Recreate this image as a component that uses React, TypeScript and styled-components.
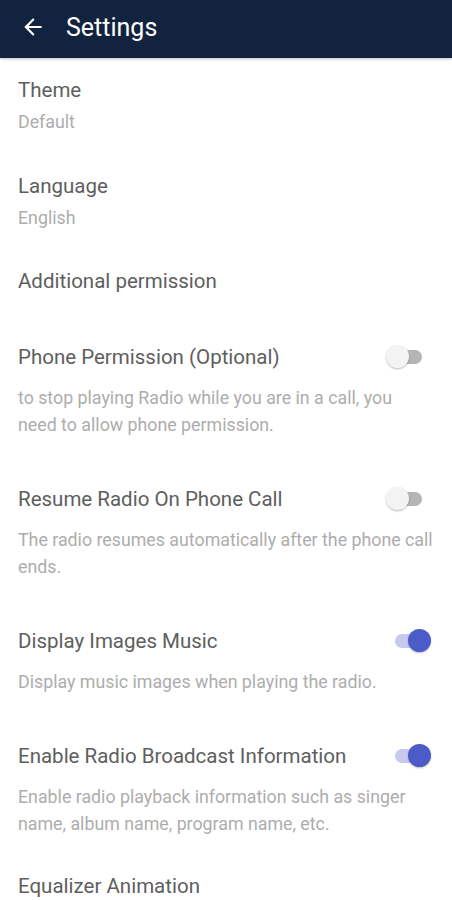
import React from "react";
import styled, { createGlobalStyle } from "styled-components";

const GlobalStyle = createGlobalStyle`
  body {
    margin: 0;
    background: #fff;
    font-family: Roboto, "Noto Sans", sans-serif;
  }
`;

type SwitchPref = {
  title: string;
  desc: string;
  on: boolean;
};

const switches: SwitchPref[] = [
  {
    title: "Phone Permission (Optional)",
    desc: "to stop playing Radio while you are in a call, you need to allow phone permission.",
    on: false,
  },
  {
    title: "Resume Radio On Phone Call",
    desc: "The radio resumes automatically after the phone call ends.",
    on: false,
  },
  {
    title: "Display Images Music",
    desc: "Display music images when playing the radio.",
    on: true,
  },
  {
    title: "Enable Radio Broadcast Information",
    desc: "Enable radio playback information such as singer name, album name, program name, etc.",
    on: true,
  },
];

const App = () => {
  return (
    <Page>
      <GlobalStyle />
      <Header>
        <BackButton aria-label="back">
          <svg width="26" height="26" viewBox="0 0 24 24">
            <path
              d="M20 11H7.83l5.59-5.59L12 4l-8 8 8 8 1.41-1.41L7.83 13H20v-2z"
              fill="#fff"
            />
          </svg>
        </BackButton>
        <HeaderTitle>Settings</HeaderTitle>
      </Header>

      <List>
        <Item>
          <Title>Theme</Title>
          <Sub>Default</Sub>
        </Item>
        <Item>
          <Title>Language</Title>
          <Sub>English</Sub>
        </Item>
        <Category $top={19} $bottom={28}>
          <Title>Additional permission</Title>
        </Category>

        {switches.map((s) => (
          <SwitchItem key={s.title}>
            <SwitchRow>
              <Title>{s.title}</Title>
              <Switch $on={s.on}>
                <Track $on={s.on} />
                <Thumb $on={s.on} />
              </Switch>
            </SwitchRow>
            <Desc>{s.desc}</Desc>
          </SwitchItem>
        ))}

        <Category $top={12} $bottom={20}>
          <Title>Equalizer Animation</Title>
        </Category>
      </List>
    </Page>
  );
};

export default App;

const Page = styled.div`
  width: 452px;
  height: 900px;
  overflow: hidden;
  background: #fff;
`;

const Header = styled.header`
  height: 58px;
  background: #12233f;
  display: flex;
  align-items: center;
  padding: 0 0 4px 20px;
  box-shadow: 0 1px 3px rgba(0, 0, 0, 0.25);
  box-sizing: border-box;
`;

const BackButton = styled.div`
  width: 26px;
  height: 26px;
  display: flex;
`;

const HeaderTitle = styled.h1`
  margin: 0 0 0 20px;
  font-size: 25px;
  font-weight: 400;
  color: #fff;
`;

const List = styled.div`
  display: flex;
  flex-direction: column;
`;

const Item = styled.div`
  padding: 20px 18px 19px;
  display: flex;
  flex-direction: column;
`;

const Category = styled.div<{ $top: number; $bottom: number }>`
  padding: ${(p) => p.$top}px 18px ${(p) => p.$bottom}px;
`;

const Title = styled.div`
  font-size: 20.5px;
  line-height: 24px;
  color: #5e5e5e;
  white-space: nowrap;
`;

const Sub = styled.div`
  margin-top: 6px;
  font-size: 17.8px;
  line-height: 27px;
  color: #adadad;
`;

const SwitchItem = styled.div`
  padding: 24px 19px 25px 18px;
`;

const SwitchRow = styled.div`
  display: flex;
  align-items: center;
  justify-content: space-between;
  height: 24px;
`;

const Desc = styled.div`
  margin-top: 15px;
  font-size: 17.8px;
  line-height: 27px;
  color: #adadad;
`;

const Switch = styled.div<{ $on: boolean }>`
  position: relative;
  width: 45px;
  height: 24px;
  margin-right: 2px;
  flex-shrink: 0;
`;

const Track = styled.div<{ $on: boolean }>`
  position: absolute;
  left: 9px;
  top: 5px;
  width: 27px;
  height: 14px;
  border-radius: 7px;
  background: ${(p) => (p.$on ? "#c7caee" : "#b5b5b5")};
`;

const Thumb = styled.div<{ $on: boolean }>`
  position: absolute;
  top: 0;
  left: ${(p) => (p.$on ? "22px" : "0")};
  width: 23px;
  height: 23px;
  border-radius: 50%;
  background: ${(p) => (p.$on ? "#4b5cc8" : "#f3f3f3")};
  box-shadow: 0 1px 2px rgba(0, 0, 0, 0.25);
`;
